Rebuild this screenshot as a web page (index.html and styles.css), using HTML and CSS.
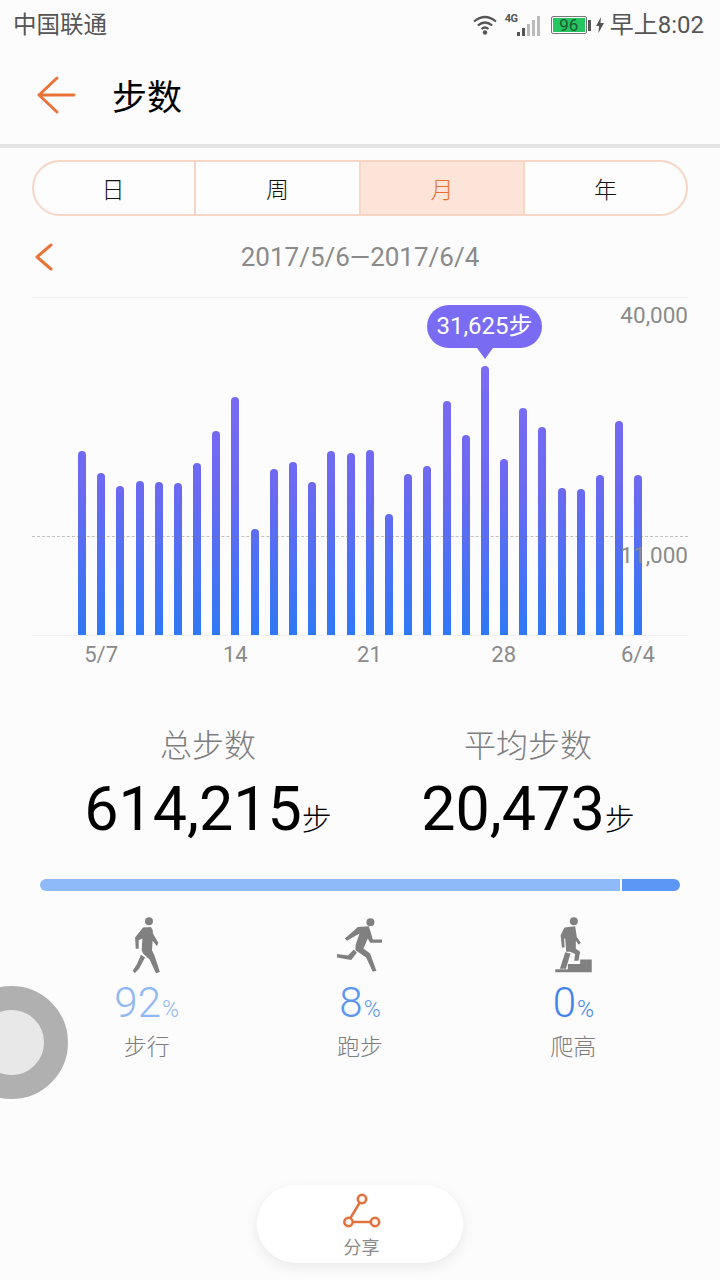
FILE: index.html
```html
<!DOCTYPE html>
<html lang="zh">
<head>
<meta charset="utf-8">
<title>步数</title>
<link rel="stylesheet" href="styles.css">
</head>
<body>
<div class="page">
  <div class="status">
    <span class="carrier">中国联通</span>
    <div class="status-right">
      <svg class="wifi" width="24" height="22" viewBox="0 0 24 22"><path d="M1 7.500Q12 -1.500 23 7.500M4.800 11.500Q12 5.500 19.200 11.500M8.500 15Q12 12 15.500 15" fill="none" stroke="#555" stroke-width="2.200"/><circle cx="12" cy="18.500" r="2.200" fill="#555"/></svg>
      <span class="net">4G</span>
      <svg class="signal" width="23" height="22" viewBox="0 0 23 22"><rect x="0" y="17" width="3" height="4" fill="#555"/><rect x="5" y="13" width="3" height="8" fill="#555"/><rect x="10" y="9" width="3" height="12" fill="#bbb"/><rect x="15" y="5" width="3" height="16" fill="#bbb"/><rect x="20" y="1" width="3" height="20" fill="#bbb"/></svg>
      <div class="battery"><div class="battery-fill">96</div></div>
      <span class="nub"></span>
      <svg class="bolt" width="8" height="16" viewBox="0 0 8 16"><path d="M5 0L0 9H3L2.500 16L8 6H4.500Z" fill="#555"/></svg>
      <span class="clock">早上8:02</span>
    </div>
  </div>

  <header class="appbar">
    <svg class="back" width="40" height="38" viewBox="0 0 40 38"><path d="M21 2L3 19L21 36M3 19H38" fill="none" stroke="#e8743a" stroke-width="3" stroke-linecap="round" stroke-linejoin="round"/></svg>
    <h1 class="title">步数</h1>
  </header>

  <nav class="tabs">
    <span class="tab">日</span>
    <span class="tab">周</span>
    <span class="tab active">月</span>
    <span class="tab">年</span>
  </nav>

  <div class="range">
    <svg class="prev" width="18" height="28" viewBox="0 0 18 28"><path d="M16 2L2 14L16 26" fill="none" stroke="#e8743a" stroke-width="3" stroke-linecap="round" stroke-linejoin="round"/></svg>
    <span class="range-text">2017/5/6—2017/6/4</span>
  </div>

  <section class="chart">
    <div class="bars">
      <i class="bar" style="height:184px"></i>
      <i class="bar" style="height:162px"></i>
      <i class="bar" style="height:149px"></i>
      <i class="bar" style="height:154px"></i>
      <i class="bar" style="height:153px"></i>
      <i class="bar" style="height:152px"></i>
      <i class="bar" style="height:172px"></i>
      <i class="bar" style="height:204px"></i>
      <i class="bar" style="height:238px"></i>
      <i class="bar" style="height:106px"></i>
      <i class="bar" style="height:166px"></i>
      <i class="bar" style="height:173px"></i>
      <i class="bar" style="height:153px"></i>
      <i class="bar" style="height:184px"></i>
      <i class="bar" style="height:182px"></i>
      <i class="bar" style="height:185px"></i>
      <i class="bar" style="height:121px"></i>
      <i class="bar" style="height:161px"></i>
      <i class="bar" style="height:169px"></i>
      <i class="bar" style="height:234px"></i>
      <i class="bar" style="height:200px"></i>
      <i class="bar" style="height:269px"></i>
      <i class="bar" style="height:176px"></i>
      <i class="bar" style="height:227px"></i>
      <i class="bar" style="height:208px"></i>
      <i class="bar" style="height:147px"></i>
      <i class="bar" style="height:146px"></i>
      <i class="bar" style="height:160px"></i>
      <i class="bar" style="height:214px"></i>
      <i class="bar" style="height:160px"></i>
    </div>
    <div class="midline"></div>
    <span class="axis axis-top">40,000</span>
    <span class="axis axis-mid">11,000</span>
    <div class="tooltip">31,625步</div>
  </section>
  <div class="xlabels">
    <span>5/7</span><span>14</span><span>21</span><span>28</span><span>6/4</span>
  </div>

  <section class="totals">
    <div class="total">
      <div class="total-label">总步数</div>
      <div class="total-value">614,215<small>步</small></div>
    </div>
    <div class="total">
      <div class="total-label">平均步数</div>
      <div class="total-value">20,473<small>步</small></div>
    </div>
  </section>

  <div class="progress">
    <div class="seg seg-walk"></div>
    <div class="seg seg-run"></div>
  </div>

  <section class="activities">
    <div class="activity">
      <svg class="figure" width="35" height="58" viewBox="390 140 105 175">
        <circle cx="450" cy="153" r="12" fill="#808080"/>
        <path d="M432 172L456 170Q462 176 462 190L478 218L474 228L461 212L459 240L466 255L483 306L471 310L452 268L432 250L428 240L430 205L419 210L419 236L410 236L408 202Z" fill="#808080"/>
        <path d="M426 254L438 262L420 296L407 310L401 302L414 282Z" fill="#808080"/>
      </svg>
      <div class="pct pct-walk">92<small>%</small></div>
      <div class="activity-label">步行</div>
    </div>
    <div class="activity">
      <svg class="figure" width="53" height="58" viewBox="1000 140 160 175">
        <circle cx="1113" cy="156" r="12" fill="#808080"/>
        <path d="M1075 170L1108 168L1115 190L1120 208L1148 208L1148 218L1112 218L1105 205L1092 235L1112 250L1131 302L1120 305L1100 262L1068 240L1068 225L1080 190L1042 212L1036 205Z" fill="#808080"/>
        <path d="M1063 238L1072 248L1055 270L1012 262L1012 252L1045 256Z" fill="#808080"/>
      </svg>
      <div class="pct pct-run">8<small>%</small></div>
      <div class="activity-label">跑步</div>
    </div>
    <div class="activity">
      <svg class="figure" width="37" height="58" viewBox="470 140 110 175">
        <circle cx="526" cy="153" r="12" fill="#808080"/>
        <path d="M498 172L530 168L535 200L547 218L541 224L532 212L532 236L545 245L540 272L527 272L530 252L515 245L503 245L500 205L497 205L498 232L490 232L486 195Z" fill="#808080"/>
        <path d="M500 246L516 250L502 296L484 296Z" fill="#808080"/>
        <path d="M470 307V298H508V282H545V268H580V307Z" fill="#808080"/>
      </svg>
      <div class="pct pct-climb">0<small>%</small></div>
      <div class="activity-label">爬高</div>
    </div>
  </section>

  <div class="float-ball"></div>

  <button class="share">
    <svg width="42" height="40" viewBox="0 0 42 40"><path d="M21 6L7 29H34" fill="none" stroke="#e0703c" stroke-width="2.500"/><circle cx="21" cy="6" r="4.200" fill="#fff6ee" stroke="#e0703c" stroke-width="2.500"/><circle cx="7.500" cy="29" r="4.200" fill="#fff6ee" stroke="#e0703c" stroke-width="2.500"/><circle cx="34" cy="29" r="4.200" fill="#fff6ee" stroke="#e0703c" stroke-width="2.500"/></svg>
    <span>分享</span>
  </button>
</div>
</body>
</html>
```

FILE: styles.css
```css
* { box-sizing: border-box; }
html, body { margin: 0; padding: 0; }
body {
  font-family: Roboto, "Noto Sans CJK SC", sans-serif;
  background: #fcfcfc;
  color: #000;
}
.page {
  position: relative;
  width: 720px;
  height: 1280px;
  overflow: hidden;
  background: #fcfcfc;
}

/* status bar */
.status {
  height: 50px;
  display: flex;
  align-items: center;
  justify-content: space-between;
  padding: 0 16px 0 13px;
  color: #555;
}
.carrier { font-size: 23.5px; line-height: 30px; margin-top: -1px; }
.status-right { display: flex; align-items: center; }
.wifi { margin-right: 8px; }
.net { font-size: 11px; font-weight: 700; width: 13px; margin-top: -14px; letter-spacing: -0.5px; color: #555; }
.signal { margin-right: 11px; margin-left: -1px; margin-top: 2px; }
.battery {
  width: 36px;
  height: 18px;
  padding: 1px;
  border: 1px solid #777;
  border-radius: 2px;
}
.battery-fill {
  height: 100%;
  background: #25c660;
  color: #1d5a35;
  font-size: 17px;
  line-height: 14px;
  text-align: center;
}
.nub { width: 3px; height: 11px; margin-left: 1px; background: #555; }
.bolt { margin-left: 5px; }
.clock { font-size: 24px; margin-left: 6px; line-height: 30px; }

/* app bar */
.appbar {
  height: 98px;
  display: flex;
  align-items: center;
  padding-bottom: 4px;
  border-bottom: 4px solid #e4e4e4;
}
.back { margin-left: 36px; }
.title {
  margin: 8px 0 0 36px;
  font-size: 35px;
  font-weight: 400;
  line-height: 50px;
}

/* segmented control */
.tabs {
  display: grid;
  grid-template-columns: 160px 165px 164px 1fr;
  height: 56px;
  margin: 12px 32px 0;
  border: 2px solid #f8d6c6;
  border-radius: 28px;
  overflow: hidden;
  background: #fdfdfd;
}
.tab {
  display: flex;
  align-items: center;
  justify-content: center;
  font-size: 23px;
  font-weight: 300;
  color: #111;
  border-left: 2px solid #f8d6c6;
}
.tab:first-child { border-left: 0; border-right: 2px solid transparent; }
.tab.active { background: #fde4d9; color: #e8702f; }

/* date range */
.range {
  position: relative;
  display: flex;
  justify-content: center;
  align-items: center;
  height: 40px;
  margin-top: 21px;
}
.prev { position: absolute; left: 35px; top: 6px; }
.range-text { font-size: 26px; color: #8a8a8a; }

/* chart */
.chart {
  position: relative;
  height: 339px;
  margin: 20px 32px 0;
  border-top: 1px solid #f0f0f0;
  border-bottom: 1px solid #f0f0f0;
}
.axis { position: absolute; right: 0; font-size: 22.5px; line-height: 26px; color: #8a8a8a; }
.axis-top { top: 4px; }
.axis-mid { top: 244px; }
.midline {
  position: absolute;
  left: 0;
  right: 0;
  top: 238px;
  border-top: 1px dashed rgba(120, 120, 120, 0.45);
}
.tooltip {
  position: absolute;
  left: 395px;
  top: 7px;
  width: 115px;
  height: 43px;
  border-radius: 22px;
  background: #7a6cf2;
  color: #fff;
  font-size: 24px;
  line-height: 43px;
  text-align: center;
}
.tooltip::after {
  content: "";
  position: absolute;
  left: 50px;
  top: 43px;
  border: 8px solid transparent;
  border-top: 11px solid #7a6cf2;
  border-bottom: 0;
}
.bars {
  display: grid;
  grid-template-columns: repeat(30, 19.2px);
  justify-items: center;
  align-items: end;
  height: 100%;
  padding-left: 40.4px;
}
.bar {
  display: block;
  width: 8px;
  border-radius: 4px 4px 0 0;
  background: linear-gradient(#7c6cf4 0%, #6d69f1 45%, #2f78f6 100%) bottom / 100% 272px no-repeat;
}
.xlabels {
  display: grid;
  grid-template-columns: repeat(5, 134.2px);
  padding-left: 34px;
  margin-top: 6px;
  font-size: 22px;
  line-height: 26px;
  color: #8a8a8a;
  text-align: center;
}

/* totals */
.totals {
  display: grid;
  grid-template-columns: 320px 320px;
  padding-left: 48px;
  margin-top: 56px;
  text-align: center;
}
.total-label { font-size: 32px; font-weight: 300; line-height: 44px; color: #7d7d7d; }
.total-value { font-size: 61px; line-height: 82px; color: #000; white-space: nowrap; }
.total-value small { font-size: 30px; font-weight: 300; }

/* progress */
.progress {
  display: flex;
  gap: 2px;
  height: 12px;
  margin: 18px 40px 0;
  border-radius: 6px;
  overflow: hidden;
}
.seg-walk { width: 580px; background: #8fbafa; }
.seg-run { flex: 1; background: #5c97f5; }

/* activity breakdown */
.activities {
  display: grid;
  grid-template-columns: repeat(3, 1fr);
  padding: 0 40px;
  margin-top: 26px;
}
.activity { display: flex; flex-direction: column; align-items: center; }
.figure { display: block; }
.pct { font-size: 42px; font-weight: 300; line-height: 46px; margin-top: 5px; }
.pct small { font-size: 23px; font-weight: 300; margin-left: 1px; }
.pct-walk { color: #8fb8f5; }
.pct-run { color: #5c97ee; }
.pct-climb { color: #3f83e8; }
.activity-label { font-size: 23px; font-weight: 300; line-height: 34px; color: #7d7d7d; margin-top: -2px; }

/* overlays */
.float-ball {
  position: absolute;
  left: -45px;
  top: 986px;
  width: 113px;
  height: 113px;
  border-radius: 50%;
  border: 24px solid #b0b0b0;
  background: #e8e8e8;
}
.share {
  position: absolute;
  left: 257px;
  top: 1185px;
  width: 206px;
  height: 78px;
  padding: 8px 0 0 3px;
  border: 0;
  border-radius: 39px;
  background: #fff;
  box-shadow: 0 4px 14px rgba(0, 0, 0, 0.08);
  display: flex;
  flex-direction: column;
  align-items: center;
  font-family: inherit;
  color: #8a8a8a;
  font-size: 18px;
  line-height: 22px;
}
.share svg { display: block; margin-bottom: 4px; }
```
